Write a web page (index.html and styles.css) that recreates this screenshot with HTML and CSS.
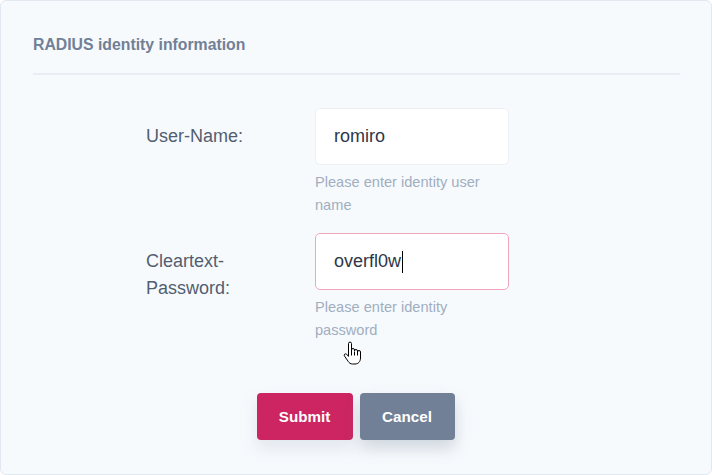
FILE: index.html
```html
<!DOCTYPE html>
<html lang="en">
<head>
<meta charset="utf-8">
<title>RADIUS identity information</title>
<link rel="stylesheet" href="styles.css">
</head>
<body>
<div class="card">
  <div class="card-header">
    <h2 class="title">RADIUS identity information</h2>
  </div>
  <form class="form">
    <div class="row">
      <label class="label">User-Name:</label>
      <div class="field">
        <div class="input" role="textbox">romiro</div>
        <p class="help">Please enter identity user name</p>
      </div>
    </div>
    <div class="row">
      <label class="label">Cleartext-Password:</label>
      <div class="field">
        <div class="input input-focus" role="textbox">overfl0w<span class="caret"></span></div>
        <p class="help">Please enter identity password</p>
        <svg class="cursor" width="20" height="26" viewBox="0 0 20 26">
          <path d="M5.5 2.6a1.5 1.5 0 0 1 3 0V10V9a1.5 1.5 0 0 1 3 0v1a1.5 1.5 0 0 1 3 0v1a1.5 1.5 0 0 1 3 0v6c0 3.5-2.2 6-5.5 6H9.5c-2 0-3.2-1-4.3-2.6L1.6 15.2a1.4 1.4 0 0 1 2.1-1.9L5.5 15.4Z" fill="#fff" stroke="#000" stroke-width="1" stroke-linejoin="round"/>
          <path d="M8.5 10v4.5M11.5 10.5v4M14.5 11v3.5" stroke="#000" stroke-width="1" fill="none"/>
        </svg>
      </div>
    </div>
    <div class="actions">
      <button type="button" class="btn btn-submit">Submit</button>
      <button type="button" class="btn btn-cancel">Cancel</button>
    </div>
  </form>
</div>
</body>
</html>
```
FILE: styles.css
```css
* { box-sizing: border-box; }
html, body { margin: 0; padding: 0; }
body {
  font-family: "Liberation Sans", Arial, sans-serif;
  background: #ffffff;
}
.card {
  width: 712px;
  height: 475px;
  background: #f7fafd;
  border: 1px solid #e2e8f0;
  border-radius: 6px;
  padding: 0 31px 0 32px;
}
.card-header {
  padding-top: 35px;
  padding-bottom: 19px;
  border-bottom: 2px solid #e9eef4;
}
.title {
  margin: 0;
  font-size: 15.8px;
  line-height: 18px;
  font-weight: bold;
  color: #718096;
}
.form {
  padding-left: 113px;
  padding-top: 33px;
}
.row {
  display: flex;
  margin-bottom: 16px;
}
.label {
  width: 169px;
  padding-right: 36px;
  padding-top: 15px;
  font-size: 18px;
  line-height: 27px;
  color: #525e70;
}
.field {
  width: 194px;
  position: relative;
}
.input {
  height: 57px;
  background: #ffffff;
  border: 1px solid #edf0f5;
  border-radius: 5px;
  padding: 0 18px;
  font-size: 18px;
  color: #2d3748;
  display: flex;
  align-items: center;
}
.input-focus {
  border-color: #f0a6bf;
}
.caret {
  display: inline-block;
  width: 1px;
  height: 22px;
  background: #000;
  margin-left: 1px;
}
.help {
  margin: 6px 0 0;
  font-size: 14.6px;
  line-height: 23px;
  color: #a0aec0;
}
.cursor {
  position: absolute;
  left: 28px;
  top: 108px;
}
.actions {
  display: flex;
  justify-content: center;
  gap: 7px;
  margin-left: -115px;
  padding-top: 35px;
}
.btn {
  height: 47px;
  border: none;
  border-radius: 4px;
  font-family: "Liberation Sans", Arial, sans-serif;
  font-size: 15.2px;
  font-weight: bold;
  color: #ffffff;
  padding: 0;
}
.btn-submit {
  width: 96px;
  background: #cc2561;
  box-shadow: 0 8px 16px rgba(160, 174, 192, 0.25);
}
.btn-cancel {
  width: 95px;
  background: #718096;
  box-shadow: 0 8px 16px rgba(113, 128, 150, 0.3);
}
```
